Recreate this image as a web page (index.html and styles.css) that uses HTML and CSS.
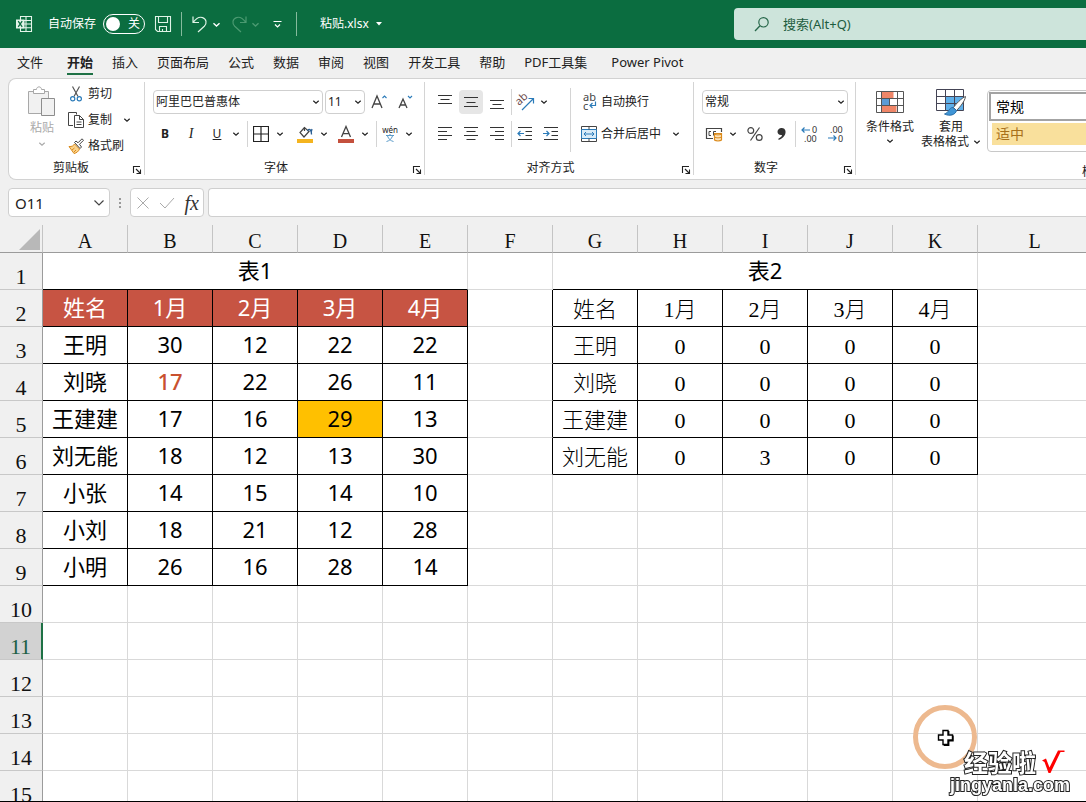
FILE: index.html
```html
<!DOCTYPE html>
<html lang="zh-CN">
<head>
<meta charset="utf-8">
<meta name="viewport" content="width=device-width, initial-scale=1">
<title>粘贴.xlsx</title>
<link rel="stylesheet" href="styles.css">
</head>
<body>
<svg class="defs" aria-hidden="true">
  <symbol id="chev" viewBox="0 0 8 8"><path d="M1.3 2.8 4 5.3 6.7 2.8" fill="none" stroke="currentColor" stroke-width="1.2"/></symbol>
  <symbol id="launch" viewBox="0 0 10 10"><path d="M1.5 8V1.5H8M4 4l4 4M8.5 4.5v4h-4" fill="none" stroke="currentColor" stroke-width="1.1"/></symbol>
</svg>

<header class="titlebar">
  <svg class="logo" width="18" height="18" viewBox="0 0 18 18"><path d="M5.5 1.5h11v15h-11zM11 1.5v15M5.5 5.5h11M5.5 9h11M5.5 12.7h11" fill="none" stroke="#e4f5ea" stroke-width="1.1"/><path d="M1 4.5h8.5v9H1z" fill="#e4f5ea"/><path d="M3.2 6.2l4 5.6M7.2 6.2l-4 5.6" stroke="#0b6d40" stroke-width="1.3"/></svg>
  <label class="autosave" for="autosave">自动保存</label>
  <span class="switch"><input type="checkbox" id="autosave"><span>关</span></span>
  <button class="tb save" aria-label="保存"><svg width="18" height="18" viewBox="0 0 18 18"><path d="M1.5 1.5h15v15h-13l-2-2zM4.5 1.5v6h9v-6M5.5 16.500v-5h7v5M8.500 16.500v-2.500" fill="none" stroke="#dff3e6" stroke-width="1.1"/></svg></button>
  <span class="tsep"></span>
  <button class="tb undo" aria-label="撤销"><svg width="18" height="18" viewBox="0 0 18 18"><path d="M2 1.500v6h6M2.300 7.200C5 3.500 8.500 1.500 11.600 2.600c4 1.400 4.500 6 1.700 8.700L7 17" fill="none" stroke="#dff3e6" stroke-width="1.2"/></svg></button>
  <button class="tb mini" aria-label="撤销选项"><svg width="9" height="9"><use href="#chev"/></svg></button>
  <button class="tb redo" aria-label="恢复"><svg width="18" height="18" viewBox="0 0 18 18"><path d="M16 1.500v6h-6M15.700 7.200C13 3.500 9.500 1.500 6.400 2.600c-4 1.400-4.500 6-1.700 8.700L11 17" fill="none" stroke="#4b9a71" stroke-width="1.2"/></svg></button>
  <button class="tb mini dim" aria-label="恢复选项"><svg width="9" height="9"><use href="#chev"/></svg></button>
  <button class="tb more" aria-label="自定义快速访问工具栏"><svg width="9" height="9" viewBox="0 0 9 9"><path d="M.5 1.500h8M2 4.500l2.500 2.500L7 4.500" fill="none" stroke="#fff" stroke-width="1.200"/></svg></button>
  <span class="tsep"></span>
  <button class="tb file">粘贴.xlsx <svg width="6" height="4" viewBox="0 0 6 4"><path d="M0 0h6L3 3.500z" fill="#fff"/></svg></button>
  <label class="search"><svg width="16" height="16" viewBox="0 0 16 16"><circle cx="9.500" cy="6.300" r="4.700" fill="none" stroke="#27674a" stroke-width="1.200"/><path d="M6 9.800 1 15" stroke="#27674a" stroke-width="1.300"/></svg><input type="text" placeholder="搜索(Alt+Q)" aria-label="搜索"></label>
</header>

<nav class="tabs">
  <a href="#">文件</a><a href="#" class="on">开始</a><a href="#">插入</a><a href="#">页面布局</a><a href="#">公式</a><a href="#">数据</a><a href="#">审阅</a><a href="#">视图</a><a href="#">开发工具</a><a href="#">帮助</a><a href="#">PDF工具集</a><a href="#">Power Pivot</a>
</nav>

<main class="app">
<section class="ribbon">
  <div class="group g-clip">
    <div class="body">
      <button class="paste"><svg width="30" height="32" viewBox="0 0 30 32"><path d="M1.500 5.500h20v22h-20z" fill="#f1f1f1" stroke="#a8a8a8"/><path d="M6.500 7.500v-4h3c0-3.500 5-3.500 5 0h3v4z" fill="#fff" stroke="#a8a8a8"/><path d="M14.500 12.500h13v17h-13z" fill="#f1f1f1" stroke="#8d8d8d"/></svg><span>粘贴</span><svg width="8" height="8"><use href="#chev"/></svg></button>
      <div class="cliplist">
        <button><svg width="16" height="16" viewBox="0 0 16 16"><path d="M4.500 0.500 10 10.500M11.500 0.500 6 10.500" stroke="#555" stroke-width="1.200"/><circle cx="4.700" cy="12.800" r="2.100" fill="none" stroke="#2b7bb9" stroke-width="1.200"/><circle cx="11.300" cy="12.800" r="2.100" fill="none" stroke="#2b7bb9" stroke-width="1.200"/></svg>剪切</button>
        <span class="split"><button><svg width="16" height="16" viewBox="0 0 16 16"><path d="M5 13.500H.5V.5h8v2" fill="none" stroke="#444"/><path d="M6.500 3.500h5l4 4v8h-9zM11.500 3.500v4h4M8.500 10h5M8.500 12.500h5" fill="none" stroke="#444"/></svg>复制</button><button class="ch" aria-label="复制选项"><svg width="8" height="8"><use href="#chev"/></svg></button></span>
        <button><svg width="16" height="16" viewBox="0 0 16 16"><path d="M1 8.500c3 .3 4.500-.8 5.500-2.500l5 5c-1 2.500-3 4-5.500 4.500L1 8.500z" fill="#fbd38c" stroke="#d88a1c"/><path d="M4 12l2.500-2M6 14l2-2" stroke="#d88a1c"/><path d="M6.500 4.500l5.500 6 1.500-1.500-2-2.700 4-4L14 .8l-4 4-2-1.800z" fill="#fff" stroke="#444"/></svg>格式刷</button>
      </div>
    </div>
    <footer><span>剪贴板</span><button class="launch" aria-label="剪贴板设置"><svg width="10" height="10"><use href="#launch"/></svg></button></footer>
  </div>

  <div class="group g-font">
    <div class="body rows">
      <div class="row">
        <span class="combo wide"><select aria-label="字体"><option>阿里巴巴普惠体</option></select><svg width="8" height="8"><use href="#chev"/></svg></span>
        <span class="combo size"><select aria-label="字号"><option>11</option></select><svg width="8" height="8"><use href="#chev"/></svg></span>
        <button class="ib" aria-label="增大字号"><svg width="18" height="18" viewBox="0 0 18 18"><path d="M1 15 6 3 11 15M2.600 11h6.800" fill="none" stroke="#444" stroke-width="1.300"/><path d="M11.500 5 13.500 3l2 2" fill="none" stroke="#2b7bb9" stroke-width="1.100"/></svg></button>
        <button class="ib" aria-label="减小字号"><svg width="18" height="18" viewBox="0 0 18 18"><path d="M2 15 6 6l4 9M3.300 12h5.400" fill="none" stroke="#444" stroke-width="1.300"/><path d="M11 3l2 2 2-2" fill="none" stroke="#2b7bb9" stroke-width="1.100"/></svg></button>
      </div>
      <div class="row">
        <button class="ib b">B</button><button class="ib i">I</button><button class="ib u">U</button><button class="ch" aria-label="下划线选项"><svg width="8" height="8"><use href="#chev"/></svg></button>
        <span class="sep"></span>
        <span class="split"><button class="ib" aria-label="边框"><svg width="16" height="16" viewBox="0 0 16 16"><path d="M.5.5h15v15H.5zM8 .5v15M.5 8h15" fill="none" stroke="#222" stroke-width="1.200"/></svg></button><button class="ch" aria-label="边框选项"><svg width="8" height="8"><use href="#chev"/></svg></button></span>
        <span class="split fill"><button class="ib" aria-label="填充颜色"><svg width="18" height="18" viewBox="0 0 18 18"><path d="M8.500 2.500 4 7.500 8 12l5-5.500L8.500 2.500zM8.500 2.500V6" fill="none" stroke="#444" stroke-width="1.200"/><path d="M11.500 6c1-3 4-2 4 3.500M13.500 5.500l2 .5.500-2" fill="none" stroke="#2b5f94" stroke-width="1.300"/><path d="M1 14h16v4H1z" fill="#f4b41f"/></svg></button><button class="ch" aria-label="填充选项"><svg width="8" height="8"><use href="#chev"/></svg></button></span>
        <span class="split"><button class="ib" aria-label="字体颜色"><svg width="18" height="18" viewBox="0 0 18 18"><path d="M4.500 12 9 1.500l4.500 10.500M6 8.700h6" fill="none" stroke="#444" stroke-width="1.300"/><path d="M1 14h16v4H1z" fill="#c4503d"/></svg></button><button class="ch" aria-label="字体颜色选项"><svg width="8" height="8"><use href="#chev"/></svg></button></span>
        <span class="sep"></span>
        <span class="split"><button class="ib pinyin"><span>wén</span><svg width="8" height="8" viewBox="0 0 8 8"><path d="M0 1.500h8M4 0v1.500M1.500 2C2.500 5 5 7 7.500 7.500M6.500 2C5.500 5 3 7 .5 7.500" fill="none" stroke="#5b9bc9"/></svg></button><button class="ch" aria-label="拼音选项"><svg width="8" height="8"><use href="#chev"/></svg></button></span>
      </div>
    </div>
    <footer><span>字体</span><button class="launch" aria-label="字体设置"><svg width="10" height="10"><use href="#launch"/></svg></button></footer>
  </div>

  <div class="group g-align">
    <div class="body">
      <div class="rows alignl">
        <div class="row">
          <button class="ib" aria-label="顶端对齐"><svg width="16" height="16" viewBox="0 0 16 16"><path d="M1 1.500h14M3.500 5.500h9M1 9.500h14" stroke="#333"/></svg></button><button class="ib sel" aria-label="垂直居中"><svg width="16" height="16" viewBox="0 0 16 16"><path d="M1 3.500h14M3.500 8.500h9M1 12.500h14" stroke="#333"/></svg></button><button class="ib" aria-label="底端对齐"><svg width="16" height="16" viewBox="0 0 16 16"><path d="M1 6.500h14M3.500 10.500h9M1 14.500h14" stroke="#333"/></svg></button>
          <span class="sep near"></span>
          <span class="split"><button class="ib" aria-label="方向"><svg class="open" width="18" height="18" viewBox="0 0 18 18"><text x="3" y="13" font-size="11" transform="rotate(-42 3 13)" fill="#6b4a4a">ab</text><path d="M6 17 17 6M12.500 5.500H17.500V10.500" fill="none" stroke="#2b7bb9" stroke-width="1.200"/></svg></button><button class="ch" aria-label="方向选项"><svg width="8" height="8"><use href="#chev"/></svg></button></span>
        </div>
        <div class="row">
          <button class="ib" aria-label="左对齐"><svg width="16" height="16" viewBox="0 0 16 16"><path d="M1 1.500h14M1 5.500h9M1 9.500h14M1 13.500h9" stroke="#333"/></svg></button><button class="ib" aria-label="居中"><svg width="16" height="16" viewBox="0 0 16 16"><path d="M1 1.500h14M3.500 5.500h9M1 9.500h14M3.500 13.500h9" stroke="#333"/></svg></button><button class="ib" aria-label="右对齐"><svg width="16" height="16" viewBox="0 0 16 16"><path d="M1 1.500h14M6 5.500h9M1 9.500h14M6 13.500h9" stroke="#333"/></svg></button>
          <span class="sep near"></span>
          <button class="ib" aria-label="减少缩进"><svg width="16" height="16" viewBox="0 0 16 16"><path d="M1 1.500h14M8.500 5.500H15M8.500 9.500H15M1 13.500h14" stroke="#333"/><path d="M7 7.500H1M3.500 5 1 7.500 3.500 10" fill="none" stroke="#2b7bb9" stroke-width="1.200"/></svg></button><button class="ib" aria-label="增加缩进"><svg width="16" height="16" viewBox="0 0 16 16"><path d="M1 1.500h14M8.500 5.500H15M8.500 9.500H15M1 13.500h14" stroke="#333"/><path d="M0 7.500h6M3.500 5 6 7.500 3.500 10" fill="none" stroke="#2b7bb9" stroke-width="1.200"/></svg></button>
        </div>
      </div>
      <span class="tall"></span>
      <div class="rows alignr">
        <div class="row"><button class="lb"><svg class="open" width="16" height="18" viewBox="0 0 16 18"><text x="2" y="8" font-size="11" fill="#444">ab</text><text x="2" y="17" font-size="11" fill="#444">c</text><path d="M14.500 8.500v4H9M11.500 10 9 12.500l2.500 2.500" fill="none" stroke="#2b7bb9" stroke-width="1.200"/></svg>自动换行</button></div>
        <div class="row"><button class="lb"><svg width="16" height="16" viewBox="0 0 16 16"><path d="M.5 3.500h15v9H.5z" fill="#d8ebf8" stroke="#2b7bb9"/><path d="M.5 3.500v-3h15v3M.5 12.500v3h15v-3M8 .5v3M8 12.500v3" fill="none" stroke="#444"/><path d="M3 8h10M5 6 3 8l2 2M11 6l2 2-2 2" fill="none" stroke="#2b7bb9"/></svg>合并后居中</button><button class="ch far" aria-label="合并选项"><svg width="8" height="8"><use href="#chev"/></svg></button></div>
      </div>
    </div>
    <footer><span>对齐方式</span><button class="launch" aria-label="对齐设置"><svg width="10" height="10"><use href="#launch"/></svg></button></footer>
  </div>

  <div class="group g-num">
    <div class="body rows">
      <div class="row"><span class="combo full"><select aria-label="数字格式"><option>常规</option></select><svg width="8" height="8"><use href="#chev"/></svg></span></div>
      <div class="row">
        <span class="split"><button class="ib" aria-label="会计数字格式"><svg width="18" height="16" viewBox="0 0 18 16"><path d="M8 12.500H1.500v-10h15V6" fill="none" stroke="#444" stroke-width="1.200"/><path d="M6 5.500H4v4h2M11 5.500H8.500v4" fill="none" stroke="#444"/><path d="M9.500 7.500h7v6.500c-1.500 1.300-5.500 1.300-7 0z" fill="#fce3bb" stroke="#db8b1d" stroke-width="1.200"/><path d="M9.500 8c1.500 1.200 5.500 1.200 7 0M9.500 11c1.500 1.200 5.500 1.200 7 0" fill="none" stroke="#db8b1d"/></svg></button><button class="ch" aria-label="会计格式选项"><svg width="8" height="8"><use href="#chev"/></svg></button></span>
        <button class="ib pct" aria-label="百分比"><svg width="16" height="16" viewBox="0 0 16 16"><circle cx="3.800" cy="4.500" r="2.900" fill="none" stroke="#444" stroke-width="1.200"/><circle cx="12.200" cy="11.500" r="2.900" fill="none" stroke="#444" stroke-width="1.200"/><path d="M12.500 1.500l-9 13" stroke="#444" stroke-width="1.200"/></svg></button><button class="ib" aria-label="千位分隔"><svg width="16" height="16" viewBox="0 0 16 16"><path d="M8 2c5-.5 5.500 4.500 3.500 7.500-1.300 2-3.500 3.700-6 4.500v-1.500c2-.8 3.300-1.800 3.500-3.500C3.500 10 3 2.700 8 2z" fill="#333"/></svg></button>
        <span class="sep near"></span>
        <button class="ib" aria-label="增加小数位数"><svg class="open" width="18" height="18" viewBox="0 0 18 18"><text x="12" y="8" font-size="9" fill="#333">0</text><text x="4" y="17" font-size="9" fill="#333">.00</text><path d="M10 5H2M4.500 2.500 2 5l2.500 2.500" fill="none" stroke="#2b7bb9" stroke-width="1.200"/></svg></button><button class="ib" aria-label="减少小数位数"><svg class="open" width="18" height="18" viewBox="0 0 18 18"><text x="4" y="8" font-size="9" fill="#333">.00</text><text x="12" y="17" font-size="9" fill="#333">0</text><path d="M2 13h8M7.500 10.500 10 13l-2.500 2.500" fill="none" stroke="#2b7bb9" stroke-width="1.200"/></svg></button>
      </div>
    </div>
    <footer><span>数字</span><button class="launch" aria-label="数字设置"><svg width="10" height="10"><use href="#launch"/></svg></button></footer>
  </div>

  <div class="group g-style">
    <div class="body">
      <button class="big"><svg width="28" height="24" viewBox="0 0 28 24"><path d="M.5 1.500h27v21H.5z" fill="#fff"/><path d="M5.500 1.500h12v7h-12zM5.500 15.500h15v7h-15z" fill="#ef8668"/><path d="M5.500 8.500h8v7h-8z" fill="#5b9bd5"/><path d="M.5 1.500h27v21H.5zM5.500 1.500v21M21.500 1.500v21M.5 8.500h27M.5 15.500h27M13.500 8.500v7" fill="none" stroke="#555"/></svg><span>条件格式</span><svg width="8" height="8"><use href="#chev"/></svg></button>
      <button class="big"><svg width="32" height="28" viewBox="0 0 32 28"><path d="M1.500 1.500h27v21h-27z" fill="#fff"/><path d="M10.500 8.500h18v14h-18z" fill="#5fb0ea"/><path d="M1.500 1.500h27v21h-27zM10.500 1.500v21M19.500 1.500v21M1.500 8.500h27M1.500 15.500h27" fill="none" stroke="#445"/><path d="M30.500 8.500c-4 1.500-10 8-12 11l3 3c3.500-3.500 8.500-9.500 9-14z" fill="#fff" stroke="#555"/><path d="M18 19.500c-4-.5-4 5.500-8.500 6.500 5 2.500 11 1 12-3.500z" fill="#3f95d6" stroke="#2b6fa8"/></svg><span>套用</span><span class="ln">表格格式<svg width="8" height="8"><use href="#chev"/></svg></span></button>
      <div class="gallery"><button class="normal">常规</button><button class="medium">适中</button></div>
    </div>
    <footer><span>样式</span></footer>
  </div>
</section>

<section class="fbar">
  <span class="namebox"><input type="text" value="O11" aria-label="名称框"><button aria-label="名称列表"><svg width="12" height="8" viewBox="0 0 12 8"><path d="M1.500 1.500 6 6l4.500-4.500" fill="none" stroke="#444" stroke-width="1.200"/></svg></button></span>
  <svg class="dots" width="4" height="12" viewBox="0 0 4 12"><path d="M1 1h2v2H1zM1 5h2v2H1zM1 9h2v2H1z" fill="#999"/></svg>
  <span class="fx"><button aria-label="取消"><svg width="14" height="14" viewBox="0 0 14 14"><path d="M1.500 1.500l11 11M12.500 1.500l-11 11" stroke="#aaa"/></svg></button><button aria-label="输入"><svg width="16" height="14" viewBox="0 0 16 14"><path d="M1 7l5 5L15 2" fill="none" stroke="#aaa"/></svg></button><button class="fxb" aria-label="插入函数">fx</button></span>
  <input class="formula" type="text" aria-label="编辑栏">
</section>

<section class="sheet">
<table>
<colgroup><col class="rh"><col class="c"><col class="c"><col class="c"><col class="c"><col class="c"><col class="c"><col class="c"><col class="c"><col class="c"><col class="c"><col class="c"><col></colgroup>
<thead><tr><th class="corner"><svg width="21" height="21" viewBox="0 0 21 21"><path d="M21 0v21H0z" fill="#b8b8b8"/></svg></th><th>A</th><th>B</th><th>C</th><th>D</th><th>E</th><th>F</th><th>G</th><th>H</th><th>I</th><th>J</th><th>K</th><th>L</th></tr></thead>
<tbody>
<tr><th>1</th><td colspan="5" class="t cap">表1</td><td></td><td colspan="5" class="t cap">表2</td><td></td></tr>
<tr><th>2</th><td class="t h">姓名</td><td class="t h">1月</td><td class="t h">2月</td><td class="t h">3月</td><td class="t h">4月</td><td class="e"></td><td class="s">姓名</td><td class="s">1月</td><td class="s">2月</td><td class="s">3月</td><td class="s">4月</td><td></td></tr>
<tr><th>3</th><td class="t">王明</td><td class="t">30</td><td class="t">12</td><td class="t">22</td><td class="t">22</td><td class="e"></td><td class="s">王明</td><td class="s">0</td><td class="s">0</td><td class="s">0</td><td class="s">0</td><td></td></tr>
<tr><th>4</th><td class="t">刘晓</td><td class="t red">17</td><td class="t">22</td><td class="t">26</td><td class="t">11</td><td class="e"></td><td class="s">刘晓</td><td class="s">0</td><td class="s">0</td><td class="s">0</td><td class="s">0</td><td></td></tr>
<tr><th>5</th><td class="t">王建建</td><td class="t">17</td><td class="t">16</td><td class="t gold">29</td><td class="t">13</td><td class="e"></td><td class="s">王建建</td><td class="s">0</td><td class="s">0</td><td class="s">0</td><td class="s">0</td><td></td></tr>
<tr><th>6</th><td class="t">刘无能</td><td class="t">18</td><td class="t">12</td><td class="t">13</td><td class="t">30</td><td class="e"></td><td class="s">刘无能</td><td class="s">0</td><td class="s">3</td><td class="s">0</td><td class="s">0</td><td></td></tr>
<tr><th>7</th><td class="t">小张</td><td class="t">14</td><td class="t">15</td><td class="t">14</td><td class="t">10</td><td></td><td></td><td></td><td></td><td></td><td></td><td></td></tr>
<tr><th>8</th><td class="t">小刘</td><td class="t">18</td><td class="t">21</td><td class="t">12</td><td class="t">28</td><td></td><td></td><td></td><td></td><td></td><td></td><td></td></tr>
<tr><th>9</th><td class="t">小明</td><td class="t">26</td><td class="t">16</td><td class="t">28</td><td class="t">14</td><td></td><td></td><td></td><td></td><td></td><td></td><td></td></tr>
<tr><th>10</th><td></td><td></td><td></td><td></td><td></td><td></td><td></td><td></td><td></td><td></td><td></td><td></td></tr>
<tr><th class="cur">11</th><td></td><td></td><td></td><td></td><td></td><td></td><td></td><td></td><td></td><td></td><td></td><td></td></tr>
<tr><th>12</th><td></td><td></td><td></td><td></td><td></td><td></td><td></td><td></td><td></td><td></td><td></td><td></td></tr>
<tr><th>13</th><td></td><td></td><td></td><td></td><td></td><td></td><td></td><td></td><td></td><td></td><td></td><td></td></tr>
<tr><th>14</th><td></td><td></td><td></td><td></td><td></td><td></td><td></td><td></td><td></td><td></td><td></td><td></td></tr>
<tr><th>15</th><td></td><td></td><td></td><td></td><td></td><td></td><td></td><td></td><td></td><td></td><td></td><td></td></tr>
</tbody>
</table>
</section>
</main>

<svg class="pointer" width="66" height="66" viewBox="0 0 66 66"><circle cx="33" cy="33" r="29.500" fill="none" stroke="#edb98f" stroke-width="5"/><path d="M31 26.500h5v4.500h4.500v5H36v4.500h-5V36h-4.500v-5H31z" fill="#fff" stroke="#000" stroke-width="1.400"/><path d="M36.700 27v4M41 31.500v5.200h-4.300v4.500h-5" fill="none" stroke="#000" stroke-width="1.400"/></svg>
<div class="mark"><div class="mark-top"><span>经验啦</span><svg width="24" height="26" viewBox="0 0 24 26"><path d="M1 11.500 5 9.500l3.500 9L17 1.500h6.500V3h-4L9.500 24H7.500L3.500 13z" fill="#f00"/></svg></div><div class="mark-url">jingyanla.com</div></div>
</body>
</html>
```
FILE: styles.css
```css
* { box-sizing: border-box; }
html, body { height: 100%; }
body {
  margin: 0;
  display: flex;
  flex-direction: column;
  overflow: hidden;
  background: #f0f0f0;
  color: #222;
  font: 12px/16px "Noto Sans", "Noto Sans CJK SC", sans-serif;
}
button, input, select { font: inherit; color: inherit; border: 0; background: none; padding: 0; margin: 0; }
button { display: flex; align-items: center; justify-content: center; flex: none; white-space: nowrap; }
svg { display: block; flex: none; }
.defs { position: absolute; width: 0; height: 0; }
.open { overflow: visible; }

/* title bar */
.titlebar { flex: none; height: 48px; display: flex; align-items: center; background: #0b6d40; color: #fff; padding-left: 15px; }
.autosave { margin-left: 15px; }
.switch { display: flex; align-items: center; justify-content: space-between; width: 42px; height: 20px; margin-left: 7px; padding: 0 4px 0 2px; border: 1px solid #fff; border-radius: 10px; }
.switch input { appearance: none; width: 14px; height: 14px; border-radius: 50%; background: #fff; }
.save { margin: 0 9px; }
.undo { margin-left: 9px; }
.tsep { width: 1px; height: 24px; background: #86bb9d; }
.mini { width: 14px; }
.redo { margin-left: 7px; }
.dim { color: #4b9a71; }
.more { margin: 0 14px 0 11px; }
.file { margin-left: 23px; gap: 7px; }
.search { display: flex; align-items: center; gap: 13px; flex: 1; max-width: 352px; height: 32px; margin-left: auto; padding-left: 20px; border-radius: 4px 0 0 4px; background: #cde4db; color: #1d5c40; font-size: 13px; }
.search input { flex: 1; min-width: 0; outline: 0; }
.search input::placeholder { color: #1d5c40; opacity: 1; }

/* tabs */
.tabs { flex: none; display: flex; gap: 19px; height: 30px; padding: 4px 0 0 17px; font-size: 13px; line-height: 20px; white-space: nowrap; }
.tabs a { color: #222; text-decoration: none; height: 23px; }
.tabs a:first-child { margin-right: 5px; }
.tabs a:last-child { margin-left: 5px; }
.tabs .on { font-weight: 700; border-bottom: 2px solid #1e7145; }

.app { flex: 1; min-height: 0; display: flex; flex-direction: column; }

/* ribbon */
.ribbon { flex: none; display: flex; margin-left: 8px; height: 102px; background: #fff; border: 1px solid #d2d2d2; border-right: 0; border-radius: 8px 0 0 8px; overflow: hidden; }
.group { flex: none; display: flex; flex-direction: column; position: relative; }
.group::after { content: ""; position: absolute; right: 0; top: 3px; bottom: 4px; width: 1px; background: #d4d4d4; }
.body { flex: 1; display: flex; }
.group footer { height: 20px; display: flex; align-items: center; justify-content: center; padding: 0 18px 2px 0; }
.launch { position: absolute; right: 3px; bottom: 4px; }
.g-clip { width: 136px; }
.g-font { width: 280px; }
.g-align { width: 269px; }
.g-num { width: 162px; }
.g-style { flex: 1 0 476px; }
.g-style footer { padding-right: 0; }
.g-clip footer { padding-right: 12px; }

.paste { flex-direction: column; justify-content: flex-start; width: 36px; margin: 7px 8px 0 15px; color: #aaa; }
.paste svg + span { margin: 2px 0 4px; }
.cliplist { display: flex; flex-direction: column; padding-top: 2px; }
.cliplist button { height: 26px; gap: 4px; justify-content: flex-start; }
.split { display: flex; align-items: center; }
.cliplist .ch { margin-left: 8px; width: 14px; justify-content: center; }

.rows { display: flex; flex-direction: column; gap: 6px; padding: 10px 0 0 7px; }
.row { display: flex; align-items: center; height: 26px; }
.ib { width: 26px; height: 24px; }
.sel { background: #e6e6e6; border-radius: 4px; width: 24px; margin: 0 1px; }
.ch { width: 12px; height: 24px; }
.sep { width: 1px; height: 26px; margin: 0 0 0 5px; background: #d4d4d4; }
.near { margin-left: 1px; }
.fill { margin: 0 3px 0 6px; }
.combo { display: grid; align-items: center; height: 24px; border: 1px solid #cfcfcf; border-radius: 4px; }
.combo > * { grid-area: 1 / 1; }
.combo select { appearance: none; width: 100%; height: 22px; padding-left: 2px; outline: 0; }
.combo svg { justify-self: end; margin-right: 2px; pointer-events: none; }
.wide { width: 170px; margin: 0 2px 0 1px; }
.size { width: 40px; margin-right: 2px; }
.full { width: 146px; margin-left: 1px; }
.b { font-weight: 700; }
.i { font-family: "Liberation Serif", serif; font-style: italic; font-size: 14px; }
.u { text-decoration: underline; }
.pinyin { flex-direction: column; font-size: 8px; line-height: 8px; }
.tall { width: 1px; height: 64px; margin: 9px 0 0; background: #d4d4d4; }
.alignl { width: 145px; }
.alignr { padding-left: 10px; }
.lb { gap: 4px; }
.far { margin-left: 9px; }
.pct { margin-left: 3px; }

.big { flex-direction: column; justify-content: flex-start; height: 76px; margin: 9px 0 0 10px; line-height: 15px; }
.big > svg:first-child { height: 28px; }
.big > span { margin-top: 3px; }
.big > svg + span + svg { margin-top: 3px; }
.big .ln { display: flex; align-items: center; gap: 4px; margin: 0; }
.big + .big { margin-left: 7px; }
.gallery { flex: 1; display: flex; flex-direction: column; gap: 2px; height: 62px; margin: 11px 0 0 6px; padding: 1px; border: 1px solid #c8c8c8; border-radius: 4px; font-size: 14px; }
.gallery button { justify-content: flex-start; }
.normal { height: 29px; padding-left: 5px; border: 2px solid #a3a3a3; color: #000; }
.medium { height: 22px; margin-left: 3px; padding-left: 4px; background: #f9e09c; color: #a8701a; }

/* formula bar */
.fbar { flex: none; display: flex; align-items: center; height: 29px; margin: 8px 0 8px 8px; }
.namebox { display: flex; width: 102px; height: 29px; padding: 0 4px 0 6px; background: #fff; border: 1px solid #cfcfcf; border-radius: 4px; font-size: 15px; }
.namebox input { flex: 1; min-width: 0; }
.dots { margin: 0 8px; }
.fx { display: flex; align-items: center; justify-content: space-between; width: 74px; height: 29px; padding: 0 4px 0 5px; background: #fff; border: 1px solid #cfcfcf; border-radius: 4px; }
.fxb { font: italic 20px/20px "Liberation Serif", serif; color: #333; }
.formula { flex: 1; min-width: 0; height: 29px; margin-left: 4px; background: #fff; border: 1px solid #cfcfcf; border-right: 0; border-radius: 4px 0 0 4px; padding: 0 6px; }

/* sheet */
.sheet { flex: 1; min-height: 0; overflow: hidden; background: #fff; border-bottom: 1px solid #000; }
table { width: calc(100% + 6px); table-layout: fixed; border-collapse: separate; border-spacing: 0; }
.rh { width: 43px; }
.c { width: 85px; }
th, td { padding: 0; text-align: center; white-space: nowrap; overflow: hidden; font-weight: 400; }
th { background: #f0f0f0; font-family: "Liberation Serif", serif; font-size: 22px; color: #111; }
thead th { height: 28px; font-size: 20px; line-height: 22px; vertical-align: bottom; border-right: 1px solid #c4c4c4; border-bottom: 1px solid #9b9b9b; }
.corner svg { margin: 0 2px 2px auto; }
tbody th { height: 37px; line-height: 24px; vertical-align: bottom; border-right: 1px solid #9b9b9b; border-bottom: 1px solid #c8c8c8; }
tbody .cur { background: #d2d2d2; color: #1e6145; border-right: 2px solid #1e7145; }
td { height: 37px; border-right: 1px solid #d9d9d9; border-bottom: 1px solid #d9d9d9; line-height: 30px; color: #000; }
.t { font-size: 22px; border-color: #000; vertical-align: top; padding-top: 2px; }
.cap { border-right-color: #d9d9d9; }
.h { background: #c75443; color: #fff; }
.red { color: #c9512f; font-weight: 500; }
.gold { background: #ffc000; }
.e { border-right-color: #000; }
.s { font: 300 22px/32px "Liberation Serif", "Noto Sans CJK SC", serif; border-color: #000; vertical-align: bottom; }

/* pointer highlight and watermark */
.pointer { position: fixed; right: 108px; bottom: 32px; }
.mark { position: fixed; right: 16px; bottom: 7px; color: #fff; text-align: right; -webkit-text-stroke: 2px #222; paint-order: stroke fill; }
.mark-top { display: flex; align-items: center; justify-content: flex-end; gap: 5px; margin-right: 5px; font: oblique 8deg 700 24px/24px "Noto Sans CJK SC", sans-serif; }
.mark-url { font: 700 18px/20px "Liberation Sans", sans-serif; }
```
